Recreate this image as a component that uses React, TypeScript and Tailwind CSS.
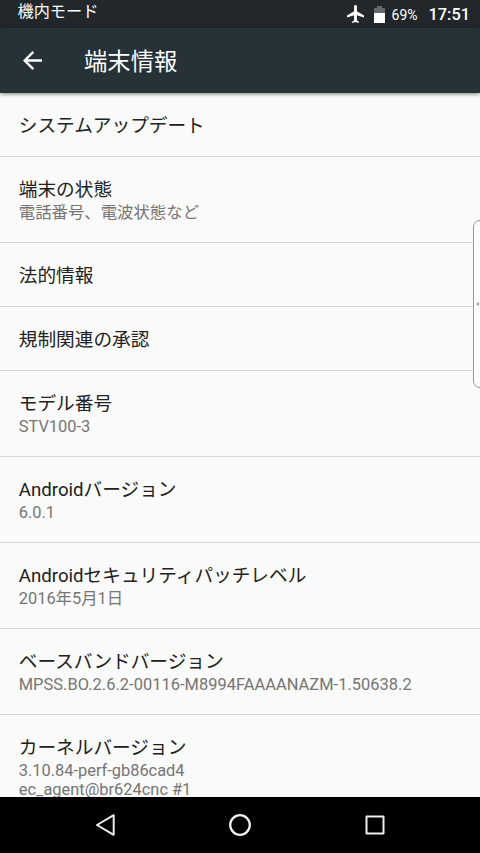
import clsx from 'clsx';

type Item = { title: string; summary?: string[] };

const ITEMS: Item[] = [
  { title: 'システムアップデート' },
  { title: '端末の状態', summary: ['電話番号、電波状態など'] },
  { title: '法的情報' },
  { title: '規制関連の承認' },
  { title: 'モデル番号', summary: ['STV100-3'] },
  { title: 'Androidバージョン', summary: ['6.0.1'] },
  { title: 'Androidセキュリティパッチレベル', summary: ['2016年5月1日'] },
  { title: 'ベースバンドバージョン', summary: ['MPSS.BO.2.6.2-00116-M8994FAAAANAZM-1.50638.2'] },
  { title: 'カーネルバージョン', summary: ['3.10.84-perf-gb86cad4', 'ec_agent@br624cnc #1'] },
];

function StatusBar() {
  return (
    <div className="flex h-7 shrink-0 items-center bg-[#21272b] pl-[17.5px] pr-[10px] text-white">
      <span className="-mt-[5px] text-[16.2px] leading-5">機内モード</span>
      <div className="ml-auto flex h-full items-center">
        <svg width="17" height="18" viewBox="2.500 2 18 20" className="mr-[10px]" fill="currentColor" preserveAspectRatio="none" aria-hidden>
          <path d="M21 16v-2l-8-5V3.500c0-.83-.67-1.500-1.500-1.500S10 2.670 10 3.500V9l-8 5v2l8-2.500V19l-2 1.500V22l3.500-1 3.500 1v-1.500L13 19v-5.500l8 2.500z" />
        </svg>
        <svg width="11" height="17" viewBox="0 0 11 17" className="mr-[7px]" aria-hidden>
          <path d="M3 0h5v2h3v5H0V2h3z" fill="#64686b" />
          <path d="M0 7h11v10H0z" fill="#fff" />
        </svg>
        <span className="mr-[11px] mt-px text-[14px] leading-5">69%</span>
        <span className="mt-px text-[16.33px] font-medium leading-5">17:51</span>
      </div>
    </div>
  );
}

function Toolbar() {
  return (
    <header className="relative flex h-[65px] shrink-0 items-center bg-[#263238] pl-[23px] text-white shadow-[0_1px_4px_rgba(0,0,0,0.5)]">
      <svg width="19" height="19" viewBox="4 4 16 16" fill="currentColor" aria-hidden>
        <path d="M20 11H7.830l5.590-5.590L12 4l-8 8 8 8 1.410-1.410L7.830 13H20v-2z" />
      </svg>
      <h1 className="ml-[42px] mt-0.5 text-[23.33px] leading-8">端末情報</h1>
    </header>
  );
}

function Row({ title, summary }: Item) {
  return (
    <li className={clsx('shrink-0 border-b border-[#d6d6d6] pl-[18.75px] pt-[19px]', summary ? 'h-[86px]' : 'h-16')}>
      <p className="text-[18.67px] leading-7 text-[#212121]">{title}</p>
      <div className="-mt-px text-[16.4px] leading-[19px] text-[#757575]">
        {summary?.map((line) => (
          <p key={line} className={clsx('whitespace-nowrap', line.length > 30 && 'tracking-[0.05px]')}>{line}</p>
        ))}
      </div>
    </li>
  );
}

function NavBar() {
  return (
    <nav className="relative flex h-14 shrink-0 items-center bg-black pl-[94px] text-[#eee]">
      <svg width="22" height="24" viewBox="0 0 22 24" fill="none" stroke="currentColor" strokeWidth="2" strokeLinejoin="round" aria-hidden>
        <path d="M19.700 2.200v19.600L3 12z" />
      </svg>
      <svg width="24" height="24" viewBox="0 0 24 24" className="ml-[112px]" fill="none" stroke="currentColor" strokeWidth="2.300" aria-hidden>
        <circle cx="12" cy="12" r="9.800" />
      </svg>
      <svg width="20" height="20" viewBox="0 0 20 20" className="ml-[113px]" fill="none" stroke="currentColor" strokeWidth="2" strokeLinejoin="round" aria-hidden>
        <path d="M1.500 1.500h17v17h-17z" />
      </svg>
    </nav>
  );
}

export default function App() {
  return (
    <div
      lang="ja"
      className="relative flex h-[853px] w-[480px] flex-col overflow-hidden bg-[#fafafa] font-[Roboto,'Noto_Sans_CJK_JP',sans-serif]"
    >
      <StatusBar />
      <Toolbar />
      <ul className="flex min-h-0 flex-1 flex-col overflow-hidden">
        {ITEMS.map((item) => (
          <Row key={item.title} {...item} />
        ))}
      </ul>
      <NavBar />
      {/* edge handle, runs off the right side of the screen */}
      <div className="absolute -right-[5px] top-[220px] flex h-[168px] w-3 items-center rounded-l-[7px] border border-[#999] bg-[#fcfcfc] pl-0.5">
        <svg width="3" height="4" viewBox="0 0 3 4" fill="#999" aria-hidden>
          <path d="M3 0v4L0 2z" />
        </svg>
      </div>
    </div>
  );
}
